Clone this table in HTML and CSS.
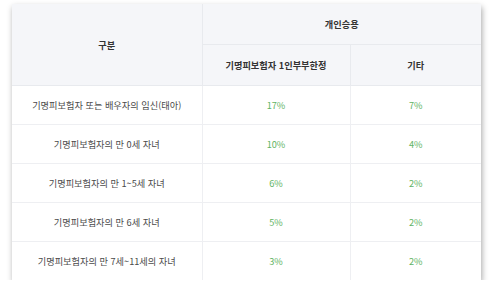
FILE: index.html
```html
<!DOCTYPE html>
<html lang="ko">
<head>
<meta charset="utf-8">
<link rel="stylesheet" href="styles.css">
</head>
<body>
<div class="card">
<table class="rate">
<colgroup><col class="c1"><col class="c2"><col class="c3"></colgroup>
<thead>
<tr><th rowspan="2" class="h">구분</th><th colspan="2" class="h">개인승용</th></tr>
<tr><th class="h">기명피보험자 1인부부한정</th><th class="h">기타</th></tr>
</thead>
<tbody>
<tr><td>기명피보험자 또는 배우자의 임신(태아)</td><td class="g">17%</td><td class="g">7%</td></tr>
<tr><td>기명피보험자의 만 0세 자녀</td><td class="g">10%</td><td class="g">4%</td></tr>
<tr><td>기명피보험자의 만 1~5세 자녀</td><td class="g">6%</td><td class="g">2%</td></tr>
<tr><td>기명피보험자의 만 6세 자녀</td><td class="g">5%</td><td class="g">2%</td></tr>
<tr><td>기명피보험자의 만 7세~11세의 자녀</td><td class="g">3%</td><td class="g">2%</td></tr>
</tbody>
</table>
</div>
</body>
</html>
```
FILE: styles.css
```css
html, body { margin: 0; padding: 0; background: #fff; }
body { padding: 4px 16px 0 12px; font-family: "Noto Sans CJK KR", "Noto Sans", sans-serif; }
.card { width: 469px; background: #fff; box-shadow: 1px 3px 6px rgba(0,0,0,0.35); }
.rate { width: 100%; border-collapse: collapse; table-layout: fixed; }
.c1 { width: 190px; }
.c2 { width: 148px; }
.c3 { width: 131px; }
.rate th, .rate td { text-align: center; padding: 0; font-size: 9.2px; }
.rate th { background: #f5f6f9; color: #333; font-weight: 700; height: 40px; border: 1px solid #e8eaee; }
.rate td { color: #4a4a4a; height: 38px; border: 1px solid #eeeff2; }
.rate tr > :first-child { border-left: none; }
.rate tr > :last-child { border-right: none; }
.rate thead tr:first-child th { border-top: none; }
.rate tbody tr:last-child td { border-bottom: none; }
.rate td.g { color: #5fb464; }
```
